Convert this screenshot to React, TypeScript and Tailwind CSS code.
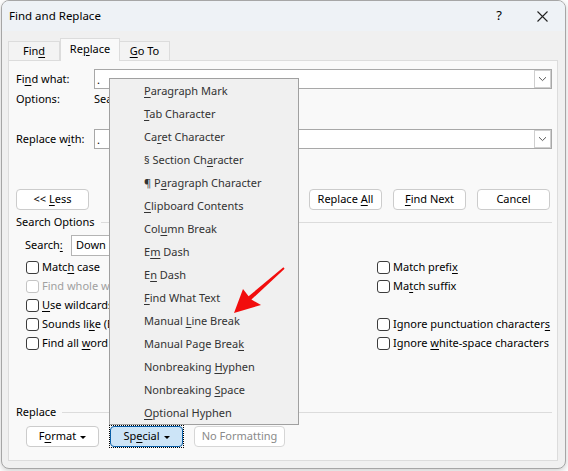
import React from "react";

function AK({ t }: { t: string }) {
  const i = t.indexOf("&");
  if (i < 0) return <span>{t}</span>;
  return (
    <span className="whitespace-pre">
      {t.slice(0, i)}
      <span className="underline decoration-1 underline-offset-[2px]">{t[i + 1]}</span>
      {t.slice(i + 2)}
    </span>
  );
}

function Chevron() {
  return (
    <svg width="9" height="6" viewBox="0 0 9 6" className="block">
      <path d="M1 1.2 L4.5 4.6 L8 1.2" fill="none" stroke="#5a5a5a" strokeWidth="1" />
    </svg>
  );
}

function Combo({ value }: { value: string }) {
  return (
    <div className="flex h-[20px] flex-1 items-center border border-[#a8a8a8] bg-white pl-[2px]">
      <span className="flex-1 leading-none">{value}</span>
      <div className="flex h-[18px] w-[17px] items-center justify-center border border-[#cfcfcf] bg-white">
        <Chevron />
      </div>
    </div>
  );
}

function Caret() {
  return <span className="mt-[1px] block h-0 w-0 border-x-[3px] border-t-[3px] border-x-transparent border-t-black" />;
}

function Btn({
  label,
  w = "w-[73px]",
  disabled = false,
  caret = false,
}: {
  label: string;
  w?: string;
  disabled?: boolean;
  caret?: boolean;
}) {
  return (
    <div
      className={`flex h-[21px] ${w} shrink-0 items-center justify-center gap-[4px] rounded-[4px] border bg-white ${
        disabled ? "border-[#d6d6d6] text-[#8a8a8a]" : "border-[#cccccc] text-black"
      }`}
    >
      <AK t={label} />
      {caret && <Caret />}
    </div>
  );
}

function Check({ label, disabled = false }: { label?: string; disabled?: boolean }) {
  if (!label) return <div className="h-[19px]" />;
  return (
    <div className="flex h-[19px] items-center gap-[3px]">
      <span
        className={`block h-[13px] w-[13px] shrink-0 rounded-[3px] border bg-white ${
          disabled ? "border-[#c4c4c4]" : "border-[#3c3c3c]"
        }`}
      />
      <span className={`whitespace-nowrap ${disabled ? "text-[#a0a0a0]" : "text-black"}`}>
        <AK t={label} />
      </span>
    </div>
  );
}

const menuItems = [
  "&Paragraph Mark",
  "&Tab Character",
  "Ca&ret Character",
  "§ Section Ch&aracter",
  "¶ P&aragraph Character",
  "&Clipboard Contents",
  "Col&umn Break",
  "E&m Dash",
  "E&n Dash",
  "&Find What Text",
  "Manual &Line Break",
  "Manual Page Brea&k",
  "Nonbreaking &Hyphen",
  "Nonbreaking &Space",
  "&Optional Hyphen",
];

export default function App() {
  return (
    <div className="relative h-[471px] w-[568px] overflow-hidden bg-white font-['Noto_Sans',sans-serif] text-[11px] text-black">
      {/* dialog */}
      <div className="absolute left-[1px] top-0 flex h-[469px] w-[565px] flex-col overflow-hidden rounded-[8px] border border-[#a6a6a6] bg-[#f0f0f0] shadow-[0_2px_6px_rgba(0,0,0,0.2)]">
        {/* title bar */}
        <div className="flex h-[30px] shrink-0 items-center bg-[#eef2f6] pl-[7px]">
          <span className="flex-1 text-[11.5px]">Find and Replace</span>
          <span className="w-[20px] text-center text-[13px]">?</span>
          <div className="ml-[25px] mr-[15px] flex h-[20px] w-[16px] items-center justify-center">
            <svg width="11" height="11" viewBox="0 0 11 11">
              <path d="M0.5 0.5 L10.5 10.5 M10.5 0.5 L0.5 10.5" stroke="#222" strokeWidth="1.1" />
            </svg>
          </div>
        </div>

        {/* body */}
        <div className="flex flex-1 flex-col pl-[6px] pt-[7px]">
          {/* tabs */}
          <div className="relative z-10 flex h-[22px] items-end">
            <div className="flex h-[19px] w-[52px] items-center justify-center border border-b-0 border-[#dcdcdc] bg-[#f3f3f3]">
              <AK t="Fin&d" />
            </div>
            <div className="-mb-px flex h-[23px] w-[60px] items-center justify-center border border-b-0 border-[#dcdcdc] bg-[#f9f9f9] pb-[2px]">
              <AK t="Re&place" />
            </div>
            <div className="flex h-[19px] w-[50px] items-center justify-center border border-b-0 border-l-0 border-[#dcdcdc] bg-[#f3f3f3]">
              <AK t="&Go To" />
            </div>
          </div>

          {/* panel */}
          <div className="flex h-[401px] w-[550px] flex-col border border-[#dcdcdc] bg-[#f9f9f9]">
            {/* Find what */}
            <div className="mt-[8px] flex h-[20px] items-center pl-[7px] pr-[5px]">
              <span className="w-[78px] shrink-0">
                <AK t="Fi&nd what:" />
              </span>
              <Combo value="." />
            </div>
            {/* Options */}
            <div className="flex h-[20px] items-center pl-[7px]">
              <span className="w-[78px] shrink-0">Options:</span>
              <span>Search Down</span>
            </div>
            {/* Replace with */}
            <div className="mt-[20px] flex h-[20px] items-center pl-[7px] pr-[5px]">
              <span className="w-[78px] shrink-0">
                <AK t="Replace w&ith:" />
              </span>
              <Combo value="." />
            </div>
            {/* buttons */}
            <div className="mt-[40px] flex h-[21px] items-center pl-[7px] pr-[7px]">
              <Btn label="<< &Less" />
              <div className="flex-1" />
              <div className="flex gap-[11px]">
                <Btn label="Replace &All" />
                <Btn label="&Find Next" />
                <Btn label="Cancel" />
              </div>
            </div>
            {/* Search Options separator */}
            <div className="mt-[4px] flex h-[16px] items-center pl-[7px] pr-[5px]">
              <span>Search Options</span>
              <div className="ml-[6px] h-px flex-1 bg-[#dcdcdc]" />
            </div>
            {/* Search select */}
            <div className="mt-[5px] flex h-[21px] items-center pl-[16px]">
              <span className="w-[46px] shrink-0">
                <AK t="Search&:" />
              </span>
              <div className="flex h-[21px] w-[96px] items-center border border-[#b4b4b4] bg-white pl-[4px]">
                <span className="flex-1">Down</span>
                <span className="mr-[4px]">
                  <Chevron />
                </span>
              </div>
            </div>
            {/* checkboxes */}
            <div className="mt-[2px] flex pl-[17px]">
              <div className="flex w-[351px] shrink-0 flex-col">
                <Check label="Matc&h case" />
                <Check label="Find whole words onl&y" disabled />
                <Check label="&Use wildcards" />
                <Check label="Sounds li&ke (English)" />
                <Check label="Find all &word forms (English)" />
              </div>
              <div className="flex flex-col">
                <Check label="Match prefi&x" />
                <Check label="Ma&tch suffix" />
                <Check />
                <Check label="Ignore punctuation character&s" />
                <Check label="Ignore &white-space characters" />
              </div>
            </div>
            {/* Replace separator */}
            <div className="mt-[51px] flex h-[16px] items-center pl-[7px] pr-[5px]">
              <span>Replace</span>
              <div className="ml-[6px] h-px flex-1 bg-[#dcdcdc]" />
            </div>
            {/* bottom buttons */}
            <div className="mt-[6px] flex h-[21px] items-center gap-[11px] pl-[17px]">
              <Btn label="F&ormat" caret />
              <div className="outline-1 outline-dotted outline-black">
                <div className="flex h-[21px] w-[73px] items-center justify-center gap-[4px] rounded-[4px] border border-[#0a5fa8] bg-[#cce4f7]">
                  <AK t="Sp&ecial" />
                  <Caret />
                </div>
              </div>
              <Btn label="No Formatting" w="w-[91px]" disabled />
            </div>
          </div>
        </div>
      </div>

      {/* Special dropdown menu */}
      <div className="absolute left-[109px] top-[78px] flex w-[190px] flex-col border border-[#a0a0a0] bg-[#f0f0f0] text-[#333]">
        {menuItems.map((m) => (
          <div key={m} className="flex h-[23px] items-center whitespace-nowrap pl-[34px] pt-[1px]">
            <AK t={m} />
          </div>
        ))}
      </div>

      {/* red arrow annotation */}
      <svg className="absolute left-0 top-0" width="568" height="471" viewBox="0 0 568 471">
        <polygon
          points="234,313 243,289 248.6,296.3 283.4,267.3 284.6,268.7 251.4,299.6 261,305"
          fill="#f20d0d"
        />
      </svg>
    </div>
  );
}
